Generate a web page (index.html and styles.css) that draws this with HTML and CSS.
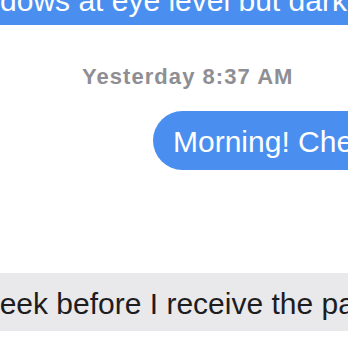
FILE: index.html
```
<!DOCTYPE html>
<html>
<head>
<meta charset="utf-8">
<link rel="stylesheet" href="styles.css">
</head>
<body>
<div class="thread">
  <div class="bubble sent top">windows at eye level but darker ones below</div>
  <div class="stamp">Yesterday 8:37 AM</div>
  <div class="bubble sent morning">Morning! Check the weather before you go</div>
  <div class="bubble received">week before I receive the package</div>
</div>
</body>
</html>
```
FILE: styles.css
```
html, body {
  margin: 0;
  padding: 0;
  background: #ffffff;
  width: 348px;
  height: 348px;
  overflow: hidden;
}
.thread {
  display: flex;
  flex-direction: column;
  align-items: flex-start;
  font-family: "Liberation Sans", Arial, sans-serif;
  -webkit-font-smoothing: antialiased;
}
.bubble {
  white-space: nowrap;
  font-size: 30px;
  line-height: 34px;
  padding: 14px 20px 11px;
  border-radius: 30px;
}
.sent {
  background: #4a8ff0;
  color: #ffffff;
}
.top {
  margin-top: -30px;
  margin-left: -65px;
  padding-bottom: 7px;
}
.stamp {
  margin-top: 39px;
  margin-left: 82px;
  font-size: 22px;
  line-height: 26px;
  font-weight: 700;
  letter-spacing: 1.05px;
  color: #8e8e93;
}
.morning {
  margin-top: 21px;
  margin-left: 153px;
}
.received {
  margin-top: 103px;
  margin-left: -42px;
  background: #e9e9eb;
  color: #1d1d1f;
  padding-bottom: 10px;
}
```
